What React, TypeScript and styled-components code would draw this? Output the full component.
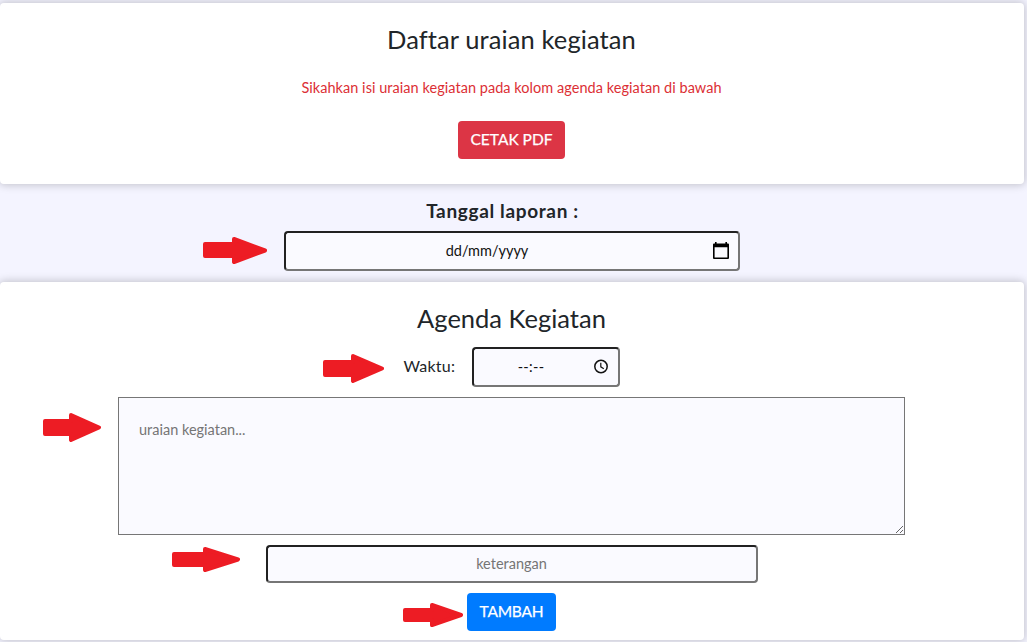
import React from "react";
import styled, { createGlobalStyle } from "styled-components";

const GlobalStyle = createGlobalStyle`
  * { box-sizing: border-box; }
  body {
    margin: 0;
    background: #f4f4ff;
    color: #212529;
    font: 400 14.5px/24px "Gill Sans", "Gill Sans MT", Lato, sans-serif;
  }
`;

const Page = styled.main`
  position: relative;
  width: 1027px;
  height: 642px;
  padding-top: 3px;
  overflow: hidden;
`;

const Card = styled.section<{ $height: number }>`
  display: flex;
  flex-direction: column;
  align-items: center;
  width: 1024px;
  height: ${(p) => p.$height}px;
  padding-top: 19px;
  border-radius: 4px;
  background: #fff;
  box-shadow: 0 0 8px 1px rgba(0, 0, 0, 0.21);
`;

const Text = styled.span<{ $spacing?: number }>`
  white-space: nowrap;
  letter-spacing: ${(p) => p.$spacing ?? 0}px;
`;

const Title = styled.h3`
  margin: 0 1px 0 0;
  font-size: 25.5px;
  font-weight: 400;
  line-height: 34px;
`;

const Notice = styled.p`
  margin: 20px 1px 21px 0;
  color: #dc2f35;
`;

const Button = styled.button<{ $color: string; $width: number }>`
  width: ${(p) => p.$width}px;
  height: 38px;
  margin-right: 1px;
  padding: 0 0 2px;
  flex: none;
  border: 0;
  border-radius: 4px;
  background: ${(p) => p.$color};
  color: #fff;
  font: 400 15.5px/24px "Gill Sans", "Gill Sans MT", Lato, sans-serif;
  -webkit-text-stroke: 0.25px #fff;
`;

const DateSection = styled.section`
  display: flex;
  flex-direction: column;
  align-items: center;
  width: 1024px;
  height: 98px;
  padding-top: 13px;
`;

const DateLabel = styled.label`
  margin: 0 19px 7px 0;
  font-size: 19px;
  font-weight: 700;
  line-height: 27px;
`;

const Field = styled.div<{ $width: number; $height: number; $end: number }>`
  display: flex;
  align-items: center;
  flex: none;
  width: ${(p) => p.$width}px;
  height: ${(p) => p.$height}px;
  padding-right: ${(p) => p.$end}px;
  border: 2px solid;
  border-color: #212121 #767676 #767676 #212121;
  border-radius: 4px;
  background: #fafaff;
  color: #111;
`;

const FieldValue = styled.span<{ $inset: number }>`
  flex: 1;
  padding: 0 ${(p) => p.$inset}px 1px 0;
  text-align: center;
`;

const TimeRow = styled.div`
  display: flex;
  align-items: center;
  gap: 17px;
  margin: 12px 1px 10px 0;
`;

const TimeLabel = styled.label`
  width: 51px;
  padding-bottom: 2px;
  font-size: 16px;
`;

const Description = styled.textarea`
  display: block;
  flex: none;
  width: 787px;
  height: 138px;
  margin: 0 1px 10px 0;
  padding: 20px;
  border: 1px solid #767676;
  border-radius: 0;
  background: #fafaff;
  font: inherit;
  &::placeholder { color: #757575; }
`;

const NoteInput = styled.input`
  flex: none;
  width: 492px;
  height: 38px;
  margin-bottom: 10px;
  padding: 0 1px 1px 0;
  border: 2px solid;
  border-color: #212121 #767676 #767676 #212121;
  border-radius: 4px;
  background: #fafaff;
  font: inherit;
  text-align: center;
  &::placeholder { color: #757575; }
`;

const ArrowMark = styled.svg<{ $x: number; $y: number }>`
  position: absolute;
  left: ${(p) => p.$x}px;
  top: ${(p) => p.$y}px;
  fill: #ed1c24;
  stroke: #ed1c24;
  stroke-width: 4;
  stroke-linejoin: round;
`;

type ArrowProps = { x: number; y: number; w: number; h: number; head: number; top: number; bottom: number };

const Arrow = ({ x, y, w, h, head, top, bottom }: ArrowProps) => (
  <ArrowMark $x={x} $y={y} width={w} height={h} aria-hidden="true">
    <path d={`M2 ${top + 2}H${head + 2}V2L${w - 2} ${h / 2}L${head + 2} ${h - 2}V${bottom - 2}H2Z`} />
  </ArrowMark>
);

const CalendarIcon = () => (
  <svg width="18" height="20" viewBox="0 0 18 20" fill="#000">
    <path fillRule="evenodd" d="M3 1h1.6v1.6h8.8V1H15v1.6h1a1 1 0 0 1 1 1V17a1 1 0 0 1-1 1H2a1 1 0 0 1-1-1V3.600a1 1 0 0 1 1-1h1zM2.600 6.200v10.200h12.800V6.200z" />
  </svg>
);

const ClockIcon = () => (
  <svg width="16" height="16" viewBox="0 0 16 16" fill="none" stroke="#111" strokeWidth="1.5">
    <circle cx="8" cy="7.500" r="6.200" />
    <path d="M7.800 3.700V7.800L10.800 9.700" strokeWidth="1.200" />
  </svg>
);

export default function App() {
  return (
    <>
      <GlobalStyle />
      <Page>
        <Card $height={181}>
          <Title><Text $spacing={0.1}>Daftar uraian kegiatan</Text></Title>
          <Notice><Text $spacing={0.04}>Sikahkan isi uraian kegiatan pada kolom agenda kegiatan di bawah</Text></Notice>
          <Button $color="#dc3545" $width={107}><Text>CETAK PDF</Text></Button>
        </Card>
        <DateSection>
          <DateLabel><Text $spacing={0.65}>Tanggal laporan :</Text></DateLabel>
          <Field $width={456} $height={40} $end={8}>
            <FieldValue $inset={24}><Text>dd/mm/yyyy</Text></FieldValue>
            <CalendarIcon />
          </Field>
        </DateSection>
        <Card $height={358}>
          <Title><Text>Agenda Kegiatan</Text></Title>
          <TimeRow>
            <TimeLabel><Text $spacing={0.2}>Waktu:</Text></TimeLabel>
            <Field $width={148} $height={40} $end={9}>
              <FieldValue $inset={4}><Text $spacing={0.3}>--:--</Text></FieldValue>
              <ClockIcon />
            </Field>
          </TimeRow>
          <Description placeholder="uraian kegiatan..." />
          <NoteInput placeholder="keterangan" />
          <Button $color="#007bff" $width={89}><Text $spacing={-0.2}>TAMBAH</Text></Button>
        </Card>
        <Arrow x={203} y={237} w={64} h={27} head={29} top={5} bottom={21} />
        <Arrow x={323} y={354} w={61} h={29} head={28} top={6} bottom={23} />
        <Arrow x={43} y={413} w={58} h={29} head={26} top={6} bottom={23} />
        <Arrow x={172} y={547} w={68} h={25} head={31} top={5} bottom={20} />
        <Arrow x={403} y={603} w={60} h={24} head={27} top={5} bottom={19} />
      </Page>
    </>
  );
}
